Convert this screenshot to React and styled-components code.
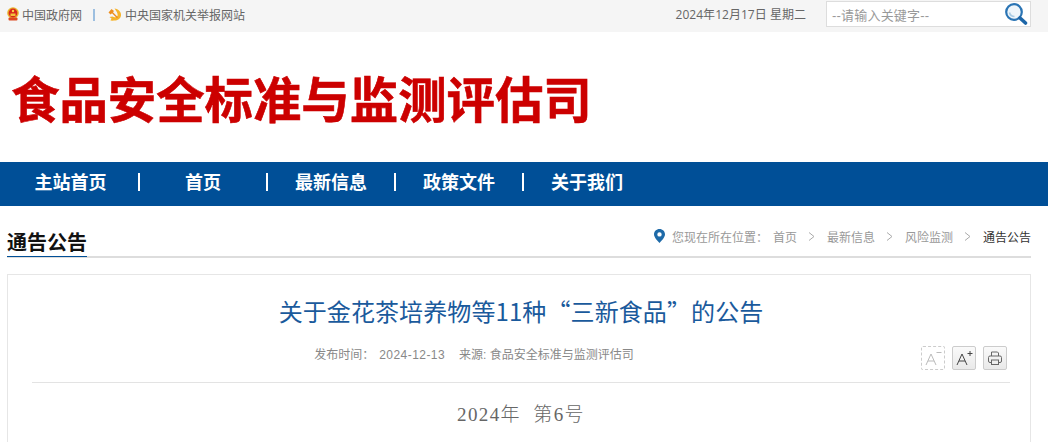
import React from 'react'
import styled, { createGlobalStyle } from 'styled-components'

const cjk = '"Liberation Sans", "Noto Sans CJK SC", sans-serif'

const GlobalStyle = createGlobalStyle`
  html, body {
    margin: 0;
    padding: 0;
    height: 442px;
    overflow: hidden;
    background: #fff;
    font-family: ${cjk};
  }
`

// Top utility bar
const TopBar = styled.div`
  height: 32px;
  background: #f5f5f5;
  display: flex;
  align-items: center;
  justify-content: space-between;
  padding: 0 17px 4px 7px;
  box-sizing: border-box;
  font-size: 12px;
  color: #666;
`

const TopLinks = styled.div`
  display: flex;
  align-items: center;
`

const TopLink = styled.span`
  display: flex;
  align-items: center;
  gap: 3px;
`

const TopDivider = styled.span`
  width: 2px;
  height: 12px;
  background: #9dbfe0;
  margin: 2px 13px 0 11px;
`

const TopRight = styled.div`
  display: flex;
  align-items: center;
  gap: 20px;
`

const DateText = styled.span`
  font-family: "Open Sans", "Noto Sans CJK SC", sans-serif;
  letter-spacing: 0.03px;
`

const SearchBox = styled.div`
  width: 205px;
  height: 26px;
  box-sizing: border-box;
  border: 1px solid #ddd;
  background: #fff;
  display: flex;
  align-items: center;
  justify-content: space-between;
  padding: 0 2px 0 5px;
  color: #999;
  font-size: 13px;
  letter-spacing: 0.2px;
`

// Site title
const Header = styled.div`
  height: 130px;
  display: flex;
  align-items: center;
  padding: 0 0 0 11px;
  box-sizing: border-box;
`

const SiteTitle = styled.h1`
  margin: 0;
  font-family: "Noto Sans CJK SC", sans-serif;
  font-weight: 700;
  font-size: 48.4px;
  line-height: 1;
  color: #cc0000;
  white-space: nowrap;
  -webkit-text-stroke: 0.6px #cc0000;
`

// Main nav
const Nav = styled.nav`
  height: 44px;
  background: #004f97;
  display: flex;
  align-items: center;
  padding: 0 0 3px 10px;
  box-sizing: border-box;
`

const NavItem = styled.a`
  width: 128px;
  box-sizing: border-box;
  text-align: center;
  color: #fff;
  font-weight: bold;
  font-size: 18px;
  line-height: 24px;
  position: relative;
  &:first-child {
    padding-right: 7px;
  }
  &:not(:first-child) {
    padding-left: 2px;
  }
  &:not(:last-child)::after {
    content: '';
    position: absolute;
    right: -2px;
    top: 2px;
    height: 18px;
    width: 2px;
    background: #fff;
  }
`

const Content = styled.main`
  padding: 0 17px 0 7px;
`

const CrumbRow = styled.div`
  height: 52px;
  border-bottom: 2px solid #ddd;
  display: flex;
  align-items: flex-end;
  justify-content: space-between;
  box-sizing: border-box;
`

const SectionTitle = styled.div`
  font-size: 20px;
  font-weight: bold;
  color: #111;
  line-height: 25px;
  border-bottom: 1px solid #004f97;
  margin-bottom: -1px;
`

const Crumbs = styled.div`
  display: flex;
  align-items: center;
  font-size: 12px;
  color: #999;
  height: 20px;
  margin-bottom: 10px;
`

const CrumbLead = styled.span`
  margin-right: 5px;
`

const CrumbSep = styled.span`
  display: flex;
  margin: 0 11.5px;
`

const CrumbCurrent = styled.span`
  color: #333;
`

const PinWrap = styled.span`
  display: flex;
  margin-right: 7px;
`

const Article = styled.article`
  margin-top: 16px;
  border: 1px solid #e6e6e6;
  padding: 0 20px 0 24px;
  height: 300px;
`

const ArticleTitle = styled.h2`
  margin: 0;
  padding: 18px 0 2px;
  font-family: "Noto Sans CJK SC", sans-serif;
  font-weight: normal;
  font-size: 24px;
  line-height: 36px;
  letter-spacing: 0.1px;
  text-align: center;
  color: #1a5a9c;
`

const MetaRow = styled.div`
  height: 52px;
  border-bottom: 1px solid #e3e3e3;
  position: relative;
  display: flex;
  justify-content: center;
  gap: 14px;
  padding: 15px 94px 0 0;
  box-sizing: border-box;
  font-size: 12px;
  color: #888;
  line-height: 18px;
`

const MetaDate = styled.span`
  margin-left: 5px;
  letter-spacing: 0.45px;
`

const Tools = styled.div`
  position: absolute;
  right: 3px;
  top: 15px;
  display: flex;
  gap: 7px;
`

const ToolButton = styled.div`
  width: 24px;
  height: 24px;
  box-sizing: border-box;
  border-radius: 2px;
  border: 1px ${p => (p.$off ? 'dashed #ccc' : 'solid #ccc')};
  background: ${p => (p.$off ? '#fff' : 'linear-gradient(#fafafa, #e9e9e9)')};
  display: flex;
  align-items: center;
  justify-content: center;
`

const DocNumber = styled.p`
  margin: 0;
  padding-top: 19px;
  text-align: center;
  font-family: "Liberation Serif", "Noto Sans CJK SC", serif;
  font-size: 19px;
  font-weight: 300;
  letter-spacing: 1.4px;
  line-height: 26px;
  color: #666;
  white-space: pre;
`

// National emblem, simplified
const Emblem = () => (
  <svg width="12" height="14" viewBox="0 0 12 14">
    <circle cx="6" cy="6" r="5.8" fill="#e9b52e" />
    <circle cx="6" cy="6" r="4.4" fill="#d8281c" />
    <circle cx="6" cy="4" r="1.2" fill="#f6d24a" />
    <rect x="3.5" y="6.5" width="5" height="2.5" fill="#f2c23c" />
    <rect x="1.5" y="10.5" width="9" height="3" rx="1" fill="#dd4a22" />
  </svg>
)

// Party badge: yellow sickle and hammer
const Party = () => (
  <svg width="14" height="13" viewBox="0 0 14 13">
    <path d="M6.5 0.5 C10.5 1 13.5 4 13 7.5 C12.5 11 9 12.8 6 12.5 L4.5 12.8 L2.5 12.5 L3.5 10.5 L1.5 9 L4.5 8.5 C6.5 9.8 9 9.2 9.6 7.4 C10 5.5 8.5 3.2 6.5 0.5 Z" fill="#f5b42c" />
    <path d="M0.5 4.5 L3.5 1 L6 3 L5 4.2 L10 9.2 L9 10.2 L4 5.2 L2.6 6.6 Z" fill="#ee8f1e" />
  </svg>
)

const Magnifier = () => (
  <svg width="24" height="24" viewBox="0 0 24 24">
    <circle cx="10" cy="10" r="7.8" fill="#eef5fa" stroke="#2a74b4" strokeWidth="2.2" />
    <path d="M5.5 10.5 C6 13 8 14.5 10.5 14.5" fill="none" stroke="#a9cbe4" strokeWidth="1.6" />
    <path d="M16 16 L21.5 21" stroke="#1d66a8" strokeWidth="3.6" strokeLinecap="round" />
  </svg>
)

const Pin = () => (
  <svg width="11" height="14" viewBox="0 0 11 14">
    <path fillRule="evenodd" d="M5.5 0 C8.6 0 11 2.4 11 5.3 C11 8.5 7.6 11.6 5.5 14 C3.4 11.6 0 8.5 0 5.3 C0 2.4 2.4 0 5.5 0 Z M5.5 3.2 A2.2 2.2 0 1 0 5.5 7.6 A2.2 2.2 0 1 0 5.5 3.2 Z" fill="#1e6aa8" />
  </svg>
)

const Chevron = () => (
  <svg width="7" height="9" viewBox="0 0 7 9" fill="none" stroke="#aaa" strokeWidth="1">
    <path d="M1 0.5 L6 4.5 L1 8.5" />
  </svg>
)

const FontIcon = ({ sign, color }) => (
  <svg width="20" height="18" viewBox="0 0 20 18" fill="none" stroke={color} strokeWidth="1">
    <path d="M3 16 L8 5 L13 16 M5 12 H11" />
    {sign === '+' ? <path d="M13.5 4.5 H18.5 M16 2 V7" /> : <path d="M13.5 3.5 H18.5" />}
  </svg>
)

const PrintIcon = () => (
  <svg width="16" height="16" viewBox="0 0 16 16" fill="none" stroke="#666" strokeWidth="1">
    <path d="M4.5 6 V2 H10.5 L11.5 3 V6" />
    <rect x="1.5" y="6" width="13" height="6.5" rx="1.5" />
    <rect x="4.5" y="10" width="7" height="4.5" fill="#eee" />
  </svg>
)

const navItems = ['主站首页', '首页', '最新信息', '政策文件', '关于我们']
const crumbs = ['首页', '最新信息', '风险监测']

export default function App() {
  return (
    <>
      <GlobalStyle />
      <TopBar>
        <TopLinks>
          <TopLink><Emblem />中国政府网</TopLink>
          <TopDivider />
          <TopLink><Party />中央国家机关举报网站</TopLink>
        </TopLinks>
        <TopRight>
          <DateText>2024年12月17日 星期二</DateText>
          <SearchBox>
            --请输入关键字--
            <Magnifier />
          </SearchBox>
        </TopRight>
      </TopBar>
      <Header>
        <SiteTitle>食品安全标准与监测评估司</SiteTitle>
      </Header>
      <Nav>
        {navItems.map(item => <NavItem key={item}>{item}</NavItem>)}
      </Nav>
      <Content>
        <CrumbRow>
          <SectionTitle>通告公告</SectionTitle>
          <Crumbs>
            <PinWrap><Pin /></PinWrap>
            <CrumbLead>您现在所在位置：</CrumbLead>
            {crumbs.map(c => (
              <React.Fragment key={c}>
                <span>{c}</span>
                <CrumbSep><Chevron /></CrumbSep>
              </React.Fragment>
            ))}
            <CrumbCurrent>通告公告</CrumbCurrent>
          </Crumbs>
        </CrumbRow>
        <Article>
          <ArticleTitle>关于金花茶培养物等11种“三新食品”的公告</ArticleTitle>
          <MetaRow>
            <span>发布时间：<MetaDate>2024-12-13</MetaDate></span>
            <span>来源: 食品安全标准与监测评估司</span>
            <Tools>
              <ToolButton $off><FontIcon sign="-" color="#bbb" /></ToolButton>
              <ToolButton><FontIcon sign="+" color="#444" /></ToolButton>
              <ToolButton><PrintIcon /></ToolButton>
            </Tools>
          </MetaRow>
          <DocNumber>2024年  第6号</DocNumber>
        </Article>
      </Content>
    </>
  )
}
